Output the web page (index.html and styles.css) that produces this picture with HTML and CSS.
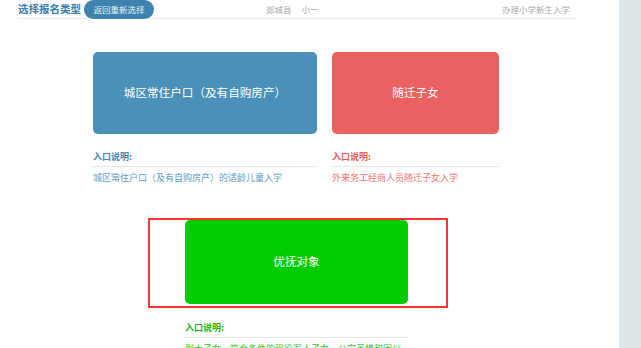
FILE: index.html
```html
<!DOCTYPE html>
<html>
<head>
    <meta charset="utf-8">
    <title>选择报名类型</title>
    <link rel="stylesheet" href="styles.css">
</head>
<body>
    <div class="page">
        <div class="main">
            <div class="head">
                <span class="title">选择报名类型</span>
                <a class="back">返回重新选择</a>
                <span class="area">郯城县</span>
                <span class="grade">小一</span>
                <span class="task">办理小学新生入学</span>
            </div>
            <div class="row">
                <div class="entry blue">
                    <div class="card">城区常住户口（及有自购房产）</div>
                    <div class="note-title">入口说明:</div>
                    <div class="note-text">城区常住户口（及有自购房产）的适龄儿童入学</div>
                </div>
                <div class="entry red">
                    <div class="card">随迁子女</div>
                    <div class="note-title">入口说明:</div>
                    <div class="note-text">外来务工经商人员随迁子女入学</div>
                </div>
            </div>
            <div class="row">
                <div class="entry green">
                    <div class="selected">
                        <div class="card">优抚对象</div>
                    </div>
                    <div class="note">
                        <div class="note-title">入口说明:</div>
                        <div class="note-text">烈士子女、符合条件的现役军人子女、公安英模和因公牺牲伤残警察子女入学</div>
                    </div>
                </div>
            </div>
        </div>
        <div class="side"></div>
    </div>
</body>
</html>
```

FILE: styles.css
```css
html, body {
    margin: 0;
    padding: 0;
    height: 100%;
    overflow: hidden;
    background: #fff;
    font-family: "Noto Sans CJK SC", "Noto Sans", sans-serif;
}
.page {
    display: flex;
    height: 348px;
}
.main {
    width: 558px;
    padding-left: 18px;
}
.side {
    margin-left: auto;
    width: 22px;
    background: #dee5e8;
}
.head {
    display: flex;
    align-items: center;
    height: 18px;
    border-bottom: 1px solid #ececec;
}
.title {
    font-size: 10.5px;
    font-weight: bold;
    color: #3a7cab;
    line-height: 18px;
}
.back {
    margin-left: 3px;
    width: 70px;
    height: 19px;
    margin-top: 1px;
    border-radius: 10px;
    background: #3d83ae;
    color: #e8f1f7;
    font-size: 8.5px;
    line-height: 19px;
    text-align: center;
}
.area, .grade, .task {
    font-size: 8.5px;
    color: #a8a8a8;
    line-height: 18px;
}
.area {
    margin-left: 112px;
}
.grade {
    margin-left: 10px;
}
.task {
    margin-left: auto;
    margin-right: 6px;
}
.row {
    display: flex;
    justify-content: center;
    gap: 15px;
    padding-right: 2px;
}
.row:nth-child(2) {
    margin-top: 33px;
}
.row:nth-child(3) {
    margin-top: 34px;
    padding-left: 4px;
}
.card {
    height: 82px;
    border-radius: 5px;
    display: flex;
    align-items: center;
    justify-content: center;
    color: #fff;
    font-size: 11.6px;
    padding-bottom: 2px;
    box-sizing: border-box;
}
.blue {
    width: 224px;
}
.red {
    width: 167px;
}
.blue .card {
    background: #4a90b8;
}
.red .card {
    background: #e96161;
}
.note-title {
    margin-top: 17px;
    font-size: 9px;
    font-weight: bold;
    line-height: 12px;
    padding-bottom: 3px;
    border-bottom: 1px solid #e6e6e6;
}
.note-text {
    margin-top: 4px;
    font-size: 9px;
    line-height: 13px;
}
.blue .note-title {
    color: #3f86b3;
}
.blue .note-text {
    color: #5a9cc4;
}
.red .note-title {
    color: #e85a5a;
}
.red .note-text {
    color: #ec7474;
}
.green {
    width: 300px;
}
.selected {
    border: 2px solid #ff3333;
    padding: 0 38px 2px 35px;
}
.green .card {
    height: 84px;
    background: #00cc00;
}
.note {
    margin-left: 37px;
    width: 223px;
}
.green .note-title {
    margin-top: 14px;
    color: #19b519;
}
.green .note-text {
    color: #2dc42d;
}
```
